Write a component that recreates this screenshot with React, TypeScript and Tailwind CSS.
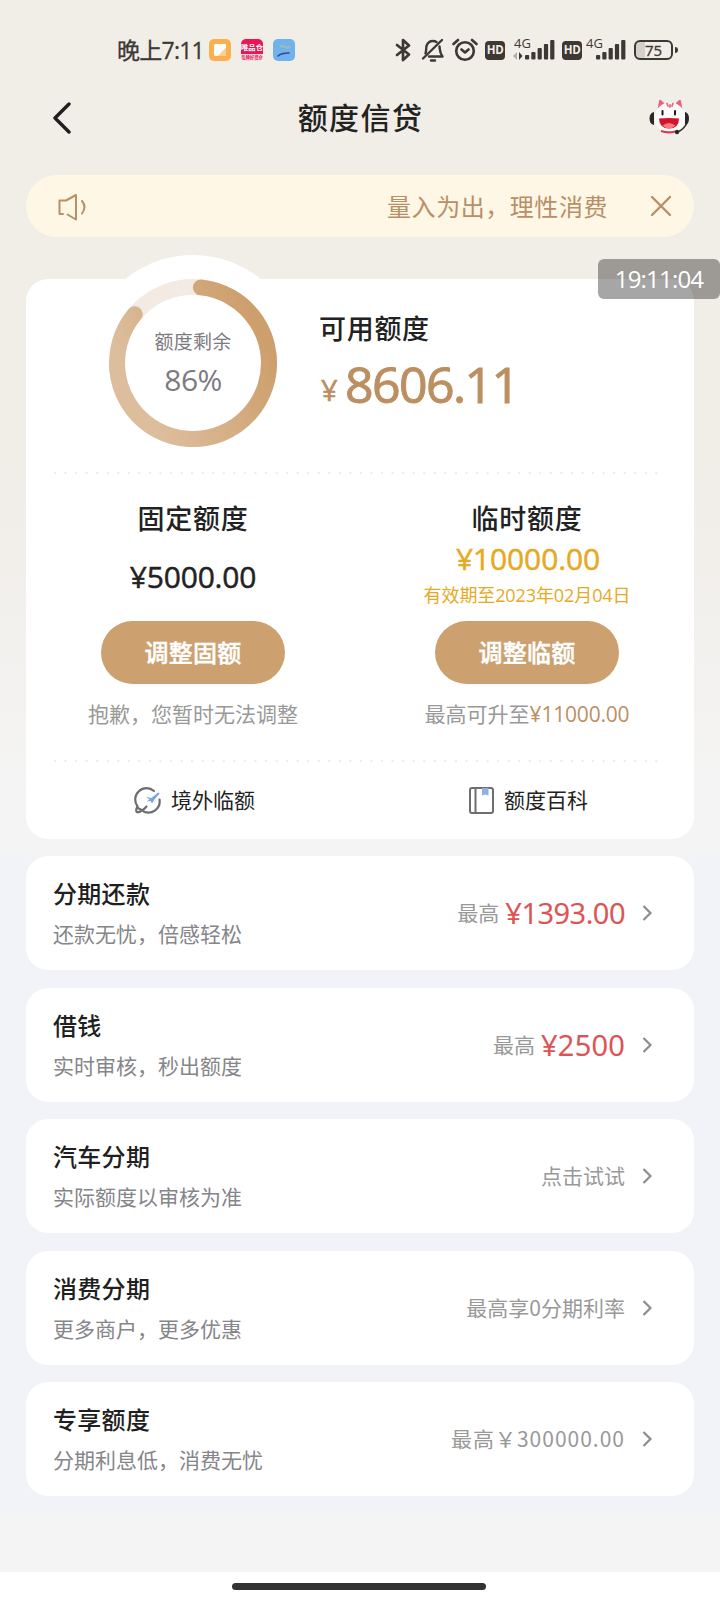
import * as React from 'react'
import type { ReactNode } from 'react'

const cn = (...tokens: Array<string | false | null | undefined>) =>
    tokens.filter(Boolean).join(' ')

/* ------------------------------------------------------------------ */
/*  Data                                                               */
/* ------------------------------------------------------------------ */

interface Product {
    title: string
    desc: string
    hint: string
    amount?: string
    hintClass?: string
    amountClass?: string
}

const PRODUCTS: Product[] = [
    { title: '分期还款', desc: '还款无忧，倍感轻松', hint: '最高', amount: '¥1393.00', amountClass: 'tracking-[-0.5px]' },
    { title: '借钱', desc: '实时审核，秒出额度', hint: '最高', amount: '¥2500', amountClass: 'tracking-[0.2px]' },
    { title: '汽车分期', desc: '实际额度以审核为准', hint: '点击试试' },
    { title: '消费分期', desc: '更多商户，更多优惠', hint: '最高享0分期利率' },
    { title: '专享额度', desc: '分期利息低，消费无忧', hint: '最高￥300000.00', hintClass: 'tracking-[1px]' },
]

const NUM = "font-['Open_Sans','Noto_Sans_CJK_SC',sans-serif]"

/* ------------------------------------------------------------------ */
/*  Status bar                                                         */
/* ------------------------------------------------------------------ */

const Signal = () => (
    <svg width="30" height="20" viewBox="0 0 30 20" fill="#3d3833">
        <rect x="0" y="15" width="4.200" height="4.500" rx="1" />
        <rect x="6.300" y="12" width="4.200" height="7.500" rx="1" />
        <rect x="12.600" y="8" width="4.200" height="11.500" rx="1" />
        <rect x="18.900" y="4" width="4.200" height="15.500" rx="1" />
        <rect x="25.200" y="0" width="4.200" height="19.500" rx="1" />
    </svg>
)

const HdBadge = () => (
    <span className="flex h-[19px] w-5 items-center justify-center rounded-[4px] bg-[#3d3833] font-['Open_Sans',sans-serif] text-[11.5px] leading-none font-bold tracking-[-0.3px] text-[#f1ede7]">
        HD
    </span>
)

const StatusBar = () => (
    <div className="flex h-20 items-center pt-5 pl-[117px] text-[#3d3833]">
        <span className={cn(NUM, 'w-[92px] text-[23px] leading-none tracking-[-0.75px] whitespace-nowrap [-webkit-text-stroke:0.3px]')}>晚上7:11</span>
        <svg width="22" height="22" viewBox="0 0 22 22">
            <rect width="22" height="22" rx="5" fill="#f9b04e" />
            <path d="M5 6.500Q5 5 6.500 5H17V9L9 17H6.500Q5 17 5 15.500Z" fill="#fff" />
            <path d="M17 9V17H9Z" fill="#fbd08f" />
        </svg>
        <span className="ml-[10px] flex h-[22px] w-[22px] flex-col overflow-hidden rounded-[5px] bg-[#f7dfe0] text-center font-['Noto_Sans_CJK_SC',sans-serif] font-bold">
            <span className="h-[15px] bg-[#ee1352] text-[7.3px] leading-[16px] whitespace-nowrap text-white">唯品仓</span>
            <span className="text-[4.4px] leading-[7px] whitespace-nowrap text-[#ee1352]">品牌好货仓</span>
        </span>
        <svg className="ml-[10px]" width="22" height="22" viewBox="0 0 22 22">
            <rect width="22" height="22" rx="5" fill="#70b1ee" />
            <path d="M7 8q2.500-2 5 0t5-1" stroke="#a3bda4" strokeWidth="2" fill="none" />
            <path d="M5 17Q8 14 16 14" stroke="#314b9c" strokeWidth="1.600" fill="none" strokeLinecap="round" />
        </svg>
        <svg className="ml-[100px]" width="17" height="24" viewBox="0 0 17 24" fill="none" stroke="#3d3833" strokeWidth="2.700" strokeLinejoin="round" strokeLinecap="round">
            <path d="M2 7L14 16.500L8 22V2L14 7.500L2 17" />
        </svg>
        <svg className="ml-[9px]" width="24" height="24" viewBox="0 0 24 24" fill="none" stroke="#3d3833" strokeWidth="2.400" strokeLinecap="round" strokeLinejoin="round">
            <path d="M4.500 15.500C5.500 13 5 9.500 5.500 8C6.500 5 9 3 12 3C13.500 3 14.500 3.300 15.500 4" />
            <path d="M18.500 8.500C19 12 18.500 14.500 21.500 18.500H8M2 20.500L21 2M10 22.500H14" />
        </svg>
        <svg className="ml-[7px]" width="26" height="24" viewBox="0 0 26 24" fill="none" stroke="#3d3833" strokeWidth="2.600" strokeLinecap="round" strokeLinejoin="round">
            <circle cx="13" cy="13" r="8.800" />
            <path d="M9.500 11.500L13 14.500L16.500 11.500M1.500 6L6 2M24.500 6L20 2" />
        </svg>
        <span className="ml-[7px]"><HdBadge /></span>
        <span className="relative ml-[8px] h-6 w-[42px]">
            <span className="absolute top-[-1px] left-[1px] font-['Open_Sans',sans-serif] text-[13px] leading-none">4G</span>
            <svg className="absolute bottom-[2px] left-0" width="10" height="8" viewBox="0 0 10 8">
                <path d="M0 4L4 0V8Z" fill="#b5afa9" />
                <path d="M6 0V8L9.500 4Z" fill="#3d3833" />
            </svg>
            <span className="absolute bottom-[2px] left-3"><Signal /></span>
        </span>
        <span className="ml-[7px]"><HdBadge /></span>
        <span className="relative ml-[4px] h-6 w-[42px]">
            <span className="absolute top-[-1px] left-0 font-['Open_Sans',sans-serif] text-[13px] leading-none">4G</span>
            <span className="absolute bottom-[2px] left-[10px]"><Signal /></span>
        </span>
        <span className="ml-[6px] flex items-center gap-[2px]">
            <span className="flex h-5 w-[39px] items-center justify-center rounded-[6px] border-2 border-[#3d3833] bg-linear-to-r from-[#d5d0ca] from-25% to-transparent to-25% font-['Open_Sans',sans-serif] text-[15px] leading-none [-webkit-text-stroke:0.3px]">
                75
            </span>
            <span className="h-[6px] w-[3px] rounded-r bg-[#3d3833]" />
        </span>
    </div>
)

/* ------------------------------------------------------------------ */
/*  Header                                                             */
/* ------------------------------------------------------------------ */

const Mascot = () => (
    <svg width="42" height="36" viewBox="0 0 42 36">
        <path d="M8.500 11L10 2Q10.500 0 12.500 1.500L17 6Z" fill="#e8627a" />
        <path d="M33.500 11L32 2Q31.500 0 29.500 1.500L25 6Z" fill="#e8627a" />
        <ellipse cx="21" cy="18.500" rx="15.500" ry="15" fill="#fdfafa" />
        <path d="M18 4.500L19 7M24 4.500L23 7M21 6V8" stroke="#e06b80" strokeWidth="1.800" strokeLinecap="round" />
        <path d="M13.500 12V15.500M26 12V15.500" stroke="#1d1a1c" strokeWidth="2" strokeLinecap="round" />
        <path d="M10 19.500Q20 18.500 30 19.500Q30 29.500 20 29.500Q10.500 29.500 10 19.500Z" fill="#d3132b" />
        <path d="M13.500 26.500Q20 21.500 26.500 26.500Q23.500 29.500 20 29.500Q16.500 29.500 13.500 26.500Z" fill="#f27b83" />
        <path d="M12 32Q19 34.500 26 32.500" stroke="#db3552" strokeWidth="2.200" fill="none" />
        <path d="M5 13Q0.500 14 0.500 19.500Q0.500 25 5 26Z" fill="#2b282a" />
        <path d="M36 13Q40 14 40 19.500Q40 25 36 26Z" fill="#2b282a" />
        <path d="M38 24Q35 30 29 33" stroke="#2b282a" strokeWidth="1.500" fill="none" />
        <circle cx="28" cy="33" r="2.200" fill="#2b282a" />
    </svg>
)

const Header = () => (
    <div className="flex h-[74px] items-center justify-between pr-[29px] pl-[52px]">
        <svg className="mt-[2px]" width="42" height="32" viewBox="0 0 42 32" fill="none" stroke="#1f1f1f" strokeWidth="3.400" strokeLinecap="round" strokeLinejoin="round">
            <path d="M17 2L3 16L17 30" />
        </svg>
        <h1 className="mb-[2px] ml-[-22px] text-[30px] leading-none font-medium tracking-[1.4px] text-[#222]">额度信贷</h1>
        <Mascot />
    </div>
)

const Notice = () => (
    <div className="mx-[26px] mt-[21px] flex h-[62px] items-center rounded-full bg-[#fef7e6] pr-[22px] pl-[31px] text-[#b98f66]">
        <svg className="mt-[1px]" width="32" height="28" viewBox="0 0 32 28" fill="none" stroke="currentColor" strokeWidth="2" strokeLinejoin="round" strokeLinecap="round">
            <path d="M6 21H2.500V7.500H9L19 2V26.500L10.500 21.500" />
            <path d="M25 8Q30 14 25 20.500" />
        </svg>
        <span className="ml-auto text-[24px] leading-none tracking-[0.55px]">量入为出，理性消费</span>
        <svg className="ml-[42px]" width="22" height="22" viewBox="0 0 22 22" fill="none" stroke="currentColor" strokeWidth="2.400" strokeLinecap="round">
            <path d="M2 2L20 20M20 2L2 20" />
        </svg>
    </div>
)

/* ------------------------------------------------------------------ */
/*  Quota card                                                         */
/* ------------------------------------------------------------------ */

const DottedLine = ({ className }: { className?: string }) => (
    <svg className={cn('block', className)} width="620" height="4" viewBox="0 0 620 4">
        <path d="M2 2H612" stroke="#ededee" strokeWidth="2.400" strokeLinecap="round" strokeDasharray="0 10.550" />
    </svg>
)

const QuotaRing = () => {
    const r = 76
    const at = (deg: number) => {
        const a = (deg * Math.PI) / 180
        return `${108 + r * Math.sin(a)} ${108 - r * Math.cos(a)}`
    }
    return (
        <div className="relative h-[216px] w-[216px] rounded-full bg-white">
            <svg className="absolute inset-0" width="216" height="216" viewBox="0 0 216 216" fill="none">
                <defs>
                    <linearGradient id="ring" x1="0.85" y1="0.1" x2="0.05" y2="0.5">
                        <stop offset="0" stopColor="#cd9f6c" />
                        <stop offset="1" stopColor="#dcbd9c" />
                    </linearGradient>
                </defs>
                <circle cx="108" cy="108" r={r} stroke="#f3ebe3" strokeWidth="16" />
                <path d={`M${at(6)}A${r} ${r} 0 1 1 ${at(310)}`} stroke="url(#ring)" strokeWidth="16" strokeLinecap="round" />
            </svg>
            <div className="relative flex flex-col items-center pt-[76px] text-[#7b7b80]">
                <span className="text-[19px] leading-[20px] tracking-[0.3px]">额度剩余</span>
                <span className={cn(NUM, 'mt-[13px] text-[30px] leading-[32px] tracking-[-0.6px]')}>86%</span>
            </div>
        </div>
    )
}

const QuotaColumn = ({ title, button, children, note }: { title: string; button: string; children: ReactNode; note: ReactNode }) => (
    <div className="flex w-[334px] flex-col items-center">
        <h2 className="text-[27px] leading-[30px] font-medium tracking-[0.7px] text-[#222]">{title}</h2>
        <div className="flex h-[88px] flex-col items-center">{children}</div>
        <button className="h-[63px] w-[184px] rounded-full bg-[#cca16f] pb-[2px] text-[24px] font-medium tracking-[0.3px] text-white [-webkit-text-stroke:0.4px]">
            {button}
        </button>
        <p className="mt-[18px] text-[21px] leading-[22px] whitespace-nowrap text-[#999]">{note}</p>
    </div>
)

const GlobeIcon = () => (
    <svg width="27" height="27" viewBox="0 0 27 27" fill="none" stroke="#6d6e70" strokeWidth="2.200" strokeLinecap="round">
        <path d="M20 4A11.300 11.300 0 0 0 3.300 19M25.500 12.500A11.300 11.300 0 0 1 9.500 24.500" />
        <path d="M3.300 19.500Q0.800 25.300 3.800 25.300Q8 24.500 12.500 19.500M3.500 20.500Q5 22 7 22.500" />
        <path d="M12 10L17.500 11L24 5.500L25.800 6.300L20.500 12.500L18 16.500L16.500 14L12.500 14.500L15.500 12.500Z" fill="#78a7d8" stroke="none" />
    </svg>
)

const BookIcon = () => (
    <svg width="25" height="27" viewBox="0 0 25 27" fill="none" stroke="#6d6e70" strokeWidth="2">
        <rect x="1" y="1" width="23" height="25" rx="2" />
        <path d="M6.500 1V26" />
        <path d="M13 1H19.500V8.500L16.200 7.500L13 8.500Z" fill="#8fb2dc" stroke="none" />
    </svg>
)

const QuotaCard = () => (
    <section className="relative mx-[26px] mt-[42px] h-[560px] rounded-[22px] bg-white">
        <div className="flex h-[192px] items-start pl-[59px]">
            <div className="mt-[-24px]"><QuotaRing /></div>
            <div className="ml-[18px] pt-[33px]">
                <h2 className="text-[27px] leading-[32px] font-medium tracking-[0.7px] text-[#222]">可用额度</h2>
                <div className={cn(NUM, 'flex items-baseline text-[#bc8f62]')}>
                    <span className="w-[26px] pl-[2px] text-[29px] [-webkit-text-stroke:0.6px]">
                        <span className="relative top-[-2px]">¥</span>
                    </span>
                    <span className="text-[50px] leading-[80px] tracking-[-1.6px] [-webkit-text-stroke:1px]">8606.11</span>
                </div>
            </div>
        </div>
        <DottedLine className="ml-[27px]" />
        <div className="flex pt-[28px]">
            <QuotaColumn title="固定额度" button="调整固额" note="抱歉，您暂时无法调整">
                <span className={cn(NUM, 'mt-[26px] text-[30px] leading-[36px] tracking-[-0.2px] text-[#222] [-webkit-text-stroke:0.5px]')}>¥5000.00</span>
            </QuotaColumn>
            <QuotaColumn
                title="临时额度"
                button="调整临额"
                note={<>最高可升至<span className={cn(NUM, 'tracking-[-0.2px] text-[#bc8f62]')}>¥11000.00</span></>}
            >
                <span className={cn(NUM, 'mt-[8px] ml-[2px] text-[30px] leading-[36px] tracking-[-0.1px] text-[#e6a91f] [-webkit-text-stroke:0.5px]')}>¥10000.00</span>
                <span className={cn(NUM, 'mt-[8px] text-[18px] leading-[20px] tracking-[-0.1px] whitespace-nowrap text-[#e6a91f]')}>有效期至2023年02月04日</span>
            </QuotaColumn>
        </div>
        <DottedLine className="mt-[34px] ml-[27px]" />
        <div className="flex pt-[22px] text-[21px] leading-[28px] text-[#222]">
            <div className="flex w-[334px] items-center gap-[10px] pl-[108px]"><GlobeIcon /><span className="mb-[3px]">境外临额</span></div>
            <div className="flex w-[334px] items-center gap-[10px] pl-[109px]"><BookIcon /><span className="mb-[3px]">额度百科</span></div>
        </div>
    </section>
)

/* ------------------------------------------------------------------ */
/*  Product list                                                       */
/* ------------------------------------------------------------------ */

const ProductRow = ({ item }: { item: Product }) => (
    <div className="flex h-[114px] items-center justify-between rounded-[22px] bg-white pr-[42px] pl-[27px]">
        <div className="mb-[2px]">
            <h3 className="text-[24px] leading-[30px] font-medium tracking-[0.3px] text-[#1f1f1f]">{item.title}</h3>
            <p className="mt-[12px] text-[21px] leading-[26px] text-[#85858a]">{item.desc}</p>
        </div>
        <div className="flex items-center text-[21px] text-[#999]">
            <span className={item.hintClass}>{item.hint}</span>
            {item.amount && (
                <span className={cn(NUM, 'mb-[1px] ml-[6px] text-[29px] leading-none text-[#dd5252] [-webkit-text-stroke:0.2px]', item.amountClass)}>
                    {item.amount}
                </span>
            )}
            <svg className="ml-[17px]" width="10" height="16" viewBox="0 0 10 16" fill="none" stroke="#8c8c8c" strokeWidth="2.200">
                <path d="M1.500 1L8.500 8L1.500 15" />
            </svg>
        </div>
    </div>
)

export default function App() {
    return (
        <div className="relative flex h-[1600px] w-[720px] flex-col overflow-hidden bg-[#f4f4f4] bg-linear-to-b from-[#f1ede7] from-28% to-[#f4f4f4] to-50% font-['Noto_Sans_CJK_SC',sans-serif]">
            <StatusBar />
            <Header />
            <Notice />
            <QuotaCard />
            <div className="mt-[17px] flex h-[656px] flex-col gap-[17.5px] bg-[#f2f3f8] px-[26px]">
                {PRODUCTS.map((item) => (
                    <ProductRow key={item.title} item={item} />
                ))}
            </div>
            <div className="h-[60px] bg-[#f4f4f4]" />
            <div className="flex h-[28px] justify-center bg-white pt-[11px] pr-[3px]">
                <span className="h-[7px] w-[254px] rounded-full bg-[#333]" />
            </div>

            {/* floating clock */}
            <div className={cn(NUM, 'absolute top-[259px] right-0 flex h-10 w-[122px] items-center justify-center rounded-[6px] bg-black/35 text-[24px] tracking-[-0.8px] text-white')}>
                19:11:04
            </div>
        </div>
    )
}
